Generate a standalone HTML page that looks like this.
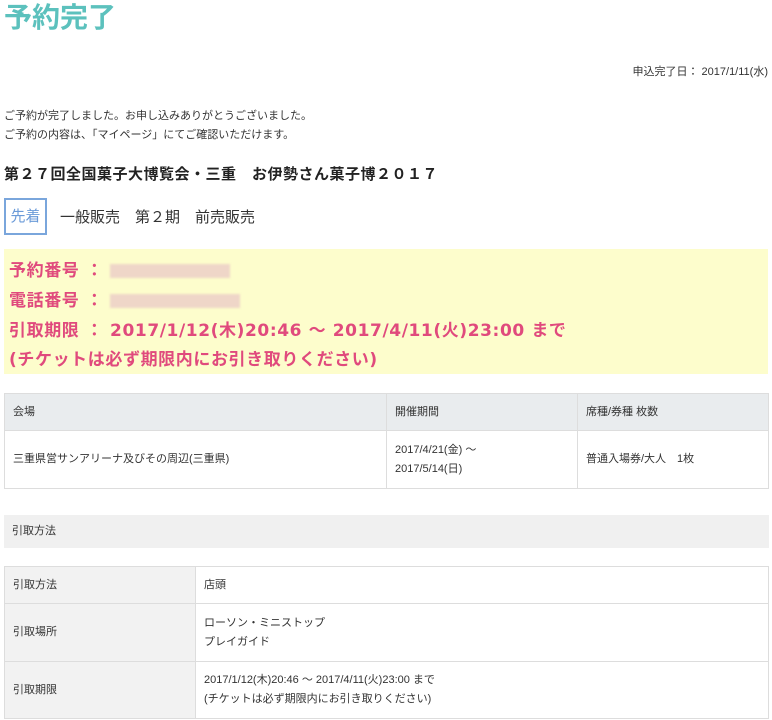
<!DOCTYPE html>
<html><head><meta charset="utf-8"><style>
*{margin:0;padding:0;box-sizing:border-box}
body{width:772px;height:720px;overflow:hidden;background:#fff;font-family:"Liberation Sans","Noto Sans CJK JP",sans-serif;color:#333;position:relative}
.a{position:absolute;white-space:nowrap}
h1{position:absolute;left:4px;top:0;font-size:28px;color:#5cc1bd;font-weight:bold;line-height:36px}
.s{font-size:11px}
.y{position:absolute;left:4px;top:249px;width:764px;height:125px;background:#fdfdcc}
.y div{position:absolute;left:5px;font-size:17px;font-weight:bold;color:#e04a7d;white-space:nowrap;font-family:"DejaVu Sans","Noto Sans CJK JP",sans-serif;letter-spacing:0.6px}
.blur{display:inline-block;width:120px;height:14px;background:#efd6c8;vertical-align:middle;filter:blur(1px)}
table{position:absolute;left:4px;border-collapse:collapse;width:765px;font-size:11px}
td{border:1px solid #ddd;padding:0 8px;vertical-align:middle;line-height:19px}
.h td{background:#e9ecee}
.l{background:#f2f2f2;width:191px}
</style></head><body>
<h1>予約完了</h1>
<div class="a s" style="right:4px;top:63px">申込完了日： 2017/1/11(水)</div>
<div class="a s" style="left:4px;top:107px">ご予約が完了しました。お申し込みありがとうございました。</div>
<div class="a s" style="left:4px;top:126px">ご予約の内容は、「マイページ」にてご確認いただけます。</div>
<div class="a" style="left:4px;top:163px;font-size:15px;font-weight:bold;color:#222;letter-spacing:0.5px">第２７回全国菓子大博覧会・三重　お伊勢さん菓子博２０１７</div>
<div class="a" style="left:4px;top:198px;width:43px;height:37px;border:2px solid #7aa6dc;color:#6a9ad8;font-size:15px;line-height:33px;text-align:center">先着</div>
<div class="a" style="left:60px;top:206px;font-size:15px;color:#333">一般販売　第２期　前売販売</div>
<div class="y">
<div style="top:7px">予約番号 ： <span class="blur"></span></div>
<div style="top:37px">電話番号 ： <span class="blur" style="width:130px"></span></div>
<div style="top:67px">引取期限 ： 2017/1/12(木)20:46 ～ 2017/4/11(火)23:00 まで</div>
<div style="top:96px">(チケットは必ず期限内にお引き取りください)</div>
</div>
<table style="top:393px">
<tr class="h" style="height:37px"><td style="width:382px">会場</td><td style="width:191px">開催期間</td><td>席種/券種 枚数</td></tr>
<tr style="height:58px"><td>三重県営サンアリーナ及びその周辺(三重県)</td><td>2017/4/21(金) ～<br>2017/5/14(日)</td><td>普通入場券/大人　1枚</td></tr>
</table>
<div class="a s" style="left:4px;top:515px;width:765px;height:33px;background:#f0f0f0;line-height:33px;padding-left:8px">引取方法</div>
<table style="top:566px">
<tr style="height:37px"><td class="l">引取方法</td><td>店頭</td></tr>
<tr style="height:58px"><td class="l">引取場所</td><td>ローソン・ミニストップ<br>プレイガイド</td></tr>
<tr style="height:57px"><td class="l">引取期限</td><td>2017/1/12(木)20:46 ～ 2017/4/11(火)23:00 まで<br>(チケットは必ず期限内にお引き取りください)</td></tr>
</table>
</body></html>
